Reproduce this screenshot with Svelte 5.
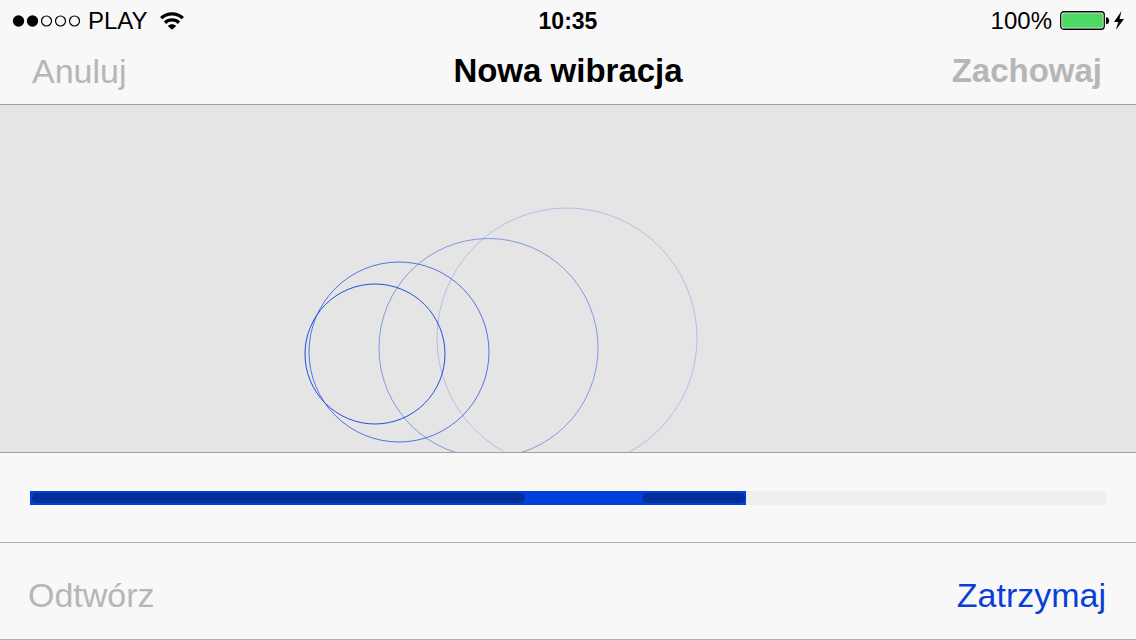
<script>
	let position = $state(716);
	const duration = 1076;

	const signal = [true, true, false, false, false];

	// recorded taps, in the same unit as the duration
	const taps = [
		{ start: 2, end: 495 },
		{ start: 612, end: 715 }
	];

	const ripples = [
		{ x: 567, y: 233, r: 130, opacity: 0.25 },
		{ x: 488.5, y: 243, r: 109.5, opacity: 0.5 },
		{ x: 399, y: 247, r: 90, opacity: 0.75 },
		{ x: 375, y: 249, r: 70, opacity: 1 }
	];

	const percent = (value) => (value / duration) * 100;
</script>

<main>
	<header>
		<div class="status">
			<div class="carrier">
				<svg width="68" height="12" viewBox="0 0 68 12" aria-hidden="true">
					{#each signal as on, i}
						<circle class="dot" class:on cx={6.5 + i * 14} cy="6" r={on ? 5.7 : 5} />
					{/each}
				</svg>
				<span>PLAY</span>
				<svg width="24" height="18" viewBox="0 0 24 18" aria-hidden="true">
					<g fill="none" stroke="#000" stroke-width="3.3">
						<path d="M1.1 6.2C7 .3 17 .3 22.9 6.2" />
						<path d="M5 10.7C9 7 15 7 19 10.7" />
					</g>
					<path d="M12 17.8 7.8 14C10.2 11.8 13.8 11.8 16.2 14Z" />
				</svg>
			</div>
			<time>10:35</time>
			<div class="power">
				<span>100%</span>
				<svg width="64" height="20" viewBox="0 0 64 20" aria-hidden="true">
					<rect x=".75" y=".75" width="43.5" height="17.5" rx="3" fill="#fff" stroke="#000" stroke-width="1.3" />
					<rect x="2.2" y="2.2" width="40.6" height="14.6" rx="1.5" fill="#4cd964" />
					<path d="M46 6.2C50.2 6.2 50.2 13.2 46 13.2Z" />
					<path d="M61.5 0 54 11H58.3L55.8 19 64 8H59.5Z" />
				</svg>
			</div>
		</div>
		<nav>
			<button disabled>Anuluj</button>
			<h1>Nowa wibracja</h1>
			<button class="save" disabled>Zachowaj</button>
		</nav>
	</header>

	<section class="pad">
		<svg viewBox="0 0 1136 347" preserveAspectRatio="xMidYMid slice" aria-hidden="true">
			{#each ripples as ripple}
				<circle cx={ripple.x} cy={ripple.y} r={ripple.r} stroke-opacity={ripple.opacity} />
			{/each}
		</svg>
	</section>

	<section class="timeline">
		<div class="track">
			<div class="elapsed" style="width: {percent(position)}%"></div>
			{#each taps as tap}
				<div class="tap" style="left: {percent(tap.start)}%; width: {percent(tap.end - tap.start)}%"></div>
			{/each}
		</div>
	</section>

	<footer>
		<button disabled>Odtwórz</button>
		<button class="stop">Zatrzymaj</button>
	</footer>
</main>

<style>
	:global(body) {
		margin: 0;
		background: #f8f8f8;
	}
	main {
		display: flex;
		flex-direction: column;
		min-height: 100vh;
		font-family: "Liberation Sans", Arial, sans-serif;
		color: #000;
	}
	header {
		background: #f8f8f8;
		border-bottom: 1px solid #a0a0a0;
	}
	.status {
		display: grid;
		grid-template-columns: 1fr auto 1fr;
		align-items: center;
		padding: 0 12px;
		font-size: 24px;
		line-height: 42px;
	}
	.carrier,
	.power {
		display: flex;
		align-items: center;
		gap: 8px;
	}
	.carrier span {
		margin-right: 4px;
	}
	.power {
		justify-content: flex-end;
	}
	.dot {
		fill: none;
		stroke: #000;
		stroke-width: 1.2px;
	}
	.dot.on {
		fill: #000;
		stroke: none;
	}
	time {
		font-size: 23px;
		font-weight: bold;
	}
	nav {
		display: grid;
		grid-template-columns: 1fr auto 1fr;
		align-items: center;
		padding: 8px 34px 12px;
	}
	nav button:first-child {
		margin-left: -2px;
	}
	h1 {
		margin: 0;
		font-size: 33px;
		line-height: 42px;
	}
	button {
		justify-self: start;
		padding: 0;
		border: 0;
		background: none;
		font-family: inherit;
		font-size: 34px;
		line-height: 40px;
		color: #0a3fd6;
		cursor: pointer;
	}
	button:disabled {
		color: #b6b6b6;
		cursor: default;
	}
	.save {
		justify-self: end;
		font-size: 33px;
		line-height: 42px;
		font-weight: bold;
	}
	.pad {
		display: flex;
		flex: 1 0 0;
		background: #e5e5e5;
	}
	.pad svg {
		flex: 1;
		width: 100%;
		min-width: 0;
		fill: none;
		stroke: #1f4fdc;
	}
	.timeline {
		padding: 38px 30px 37px;
		background: #f8f8f8;
		border-top: 1px solid #a0a0a0;
	}
	.track {
		position: relative;
		height: 14px;
		background: #efefef;
	}
	.elapsed {
		height: 100%;
		background: #0040dd;
	}
	.tap {
		position: absolute;
		top: 2px;
		height: 10px;
		border-radius: 5px;
		background: #002e9b;
	}
	footer {
		display: flex;
		justify-content: space-between;
		align-items: center;
		padding: 32px 30px 24px 28px;
		background: #f8f8f8;
		border-top: 1px solid #b0b0b0;
		border-bottom: 1px solid #b0b0b0;
	}
</style>
